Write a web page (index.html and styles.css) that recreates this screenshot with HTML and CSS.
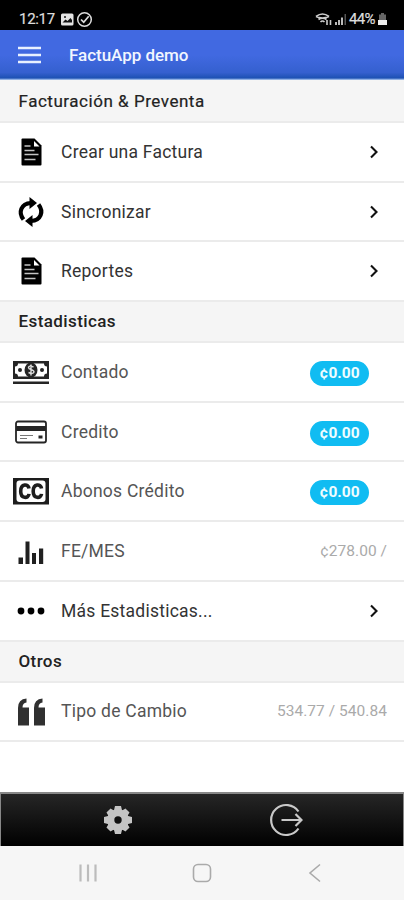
FILE: index.html
```html
<!DOCTYPE html>
<html lang="es">
<head>
<meta charset="utf-8">
<meta name="viewport" content="width=device-width, initial-scale=1">
<title>FactuApp demo</title>
<link rel="stylesheet" href="styles.css">
</head>
<body>
<svg class="defs" width="0" height="0">
  <symbol id="doc" viewBox="0 0 36 36"><path d="M9.500 4.500h12l7 7v19q0 1-1 1h-18q-1 0-1-1v-25q0-1 1-1z"/><path fill="#fff" d="M21 7v5.500h5.500z"/><path stroke="#c4c4c4" stroke-width="1.500" d="M11.500 12h6M11.500 16.500h10M11.500 20.500h14M11.500 25.500h11"/></symbol>
  <symbol id="chev" viewBox="0 0 10 14"><path d="M2 1.500 7.500 7 2 12.500" fill="none" stroke="#111" stroke-width="2.100"/></symbol>
</svg>
<div class="status">
  <span class="time">12:17</span>
  <svg width="34" height="18" viewBox="0 0 34 18"><rect x="2" y="3.500" width="12.500" height="12" rx="1.500" fill="#e4e4e4"/><path d="m3.500 12.500 3-3 2 1.500 3-3 1.500 2v2.500z" fill="#111"/><circle cx="6" cy="7" r="1" fill="#111"/><circle cx="25.500" cy="9.500" r="6.800" fill="none" stroke="#ddd" stroke-width="1.500"/><path d="m22 9.500 2.700 2.700 5-6" fill="none" stroke="#ddd" stroke-width="1.700"/></svg>
  <span class="space"></span>
  <svg width="34" height="18" viewBox="0 0 34 18"><g fill="none" stroke="#ccc" stroke-width="1.600"><path d="M1 6.500q6.500-5 13 0M1 6.500q6.500 3 13 0M3.500 9.500q4-2.500 8 0M5.500 12q2-2 4 0M12 10v5M15.500 10v5"/></g><g fill="#bbb"><path d="M20 12h2v3h-2zM23 10h2v5h-2zM26 7.500h2V15h-2z"/><path d="M29.500 4h1.500v11h-1.500z" fill="#555"/></g></svg>
  <span class="percent">44%</span>
  <svg class="battery" width="9" height="14" viewBox="0 0 9 14"><path d="M3 1h3v1.500h2V8H1V2.500h2z" fill="#666"/><path d="M0 8h9v5H0z" fill="#eee"/></svg>
</div>
<header class="topbar">
  <svg width="23" height="18" viewBox="0 0 23 18"><path stroke="#e9f1ff" stroke-width="2.600" d="M0 2h23M0 9h23M0 16h23"/></svg>
  <h1>FactuApp demo</h1>
</header>
<main>
  <h2 class="first">Facturación &amp; Preventa</h2>
  <div class="row"><svg class="icon"><use href="#doc"/></svg><span class="label">Crear una Factura</span><svg class="chev"><use href="#chev"/></svg></div>
  <div class="row"><svg class="icon" viewBox="0 0 36 36"><g fill="none" stroke="#000" stroke-width="4.200"><path d="M10.500 25.500C5 18.500 8 9.500 18 9"/><path d="M25.500 10.500C31 17.500 28 26.500 18 27"/></g><path d="m16.500 3 7.500 6-7.500 6zM19.500 21v12L12 27z"/></svg><span class="label">Sincronizar</span><svg class="chev"><use href="#chev"/></svg></div>
  <div class="row"><svg class="icon"><use href="#doc"/></svg><span class="label">Reportes</span><svg class="chev"><use href="#chev"/></svg></div>
  <h2>Estadisticas</h2>
  <div class="row"><svg class="icon" viewBox="0 0 36 36"><g fill="#252525"><path d="M0 7h36v18H0zM0 27.500h36V30H0z"/><path fill="#fff" d="M5 9.500h26q0 3 3 3v7q-3 0-3 3H5q0-3-3-3v-7q3 0 3-3z"/><ellipse cx="18" cy="16" rx="6.500" ry="7.500"/><circle cx="7" cy="16" r="2"/><circle cx="29" cy="16" r="2"/></g><path d="M20.500 13q-4.500-2-5 .5c0 2.800 5.500 1.500 5.500 4.500q-1 2.500-5.500.5M18 10.500v11" fill="none" stroke="#ddd" stroke-width="1.400"/></svg><span class="label gray">Contado</span><span class="badge">¢0.00</span></div>
  <div class="row"><svg class="icon" viewBox="0 0 36 36"><rect x="3" y="7.500" width="30" height="21" rx="2" fill="#fff" stroke="#252525" stroke-width="1.800"/><path fill="#252525" d="M3 12h30v5H3zM25.500 21.500h4v3h-4z"/><path stroke="#777" d="M7 21.500h13M7 24.500h7"/></svg><span class="label gray">Credito</span><span class="badge">¢0.00</span></div>
  <div class="row"><svg class="icon" viewBox="0 0 36 36"><path fill="#1d1d1d" d="M0 5h36v26.500H0z"/><rect x="3.500" y="7.500" width="29" height="21.500" rx="3" fill="#fff"/><g fill="none" stroke="#1d1d1d" stroke-width="3.600"><path d="M16 15.500c-.5-5-8.300-5-8.300 2.700s7.800 7.700 8.300 2.700M28.500 15.500c-.5-5-8.300-5-8.300 2.700s7.800 7.700 8.300 2.700"/></g></svg><span class="label gray">Abonos Crédito</span><span class="badge">¢0.00</span></div>
  <div class="row"><svg class="icon" viewBox="0 0 36 36"><path fill="#202020" d="M5.500 24.500H10V31H5.500zM12.500 8.500h4V31h-4zM19 20h4v11h-4zM26 15.500h4.200V31H26z"/></svg><span class="label gray">FE/MES</span><span class="value">¢278.00 /</span></div>
  <div class="row"><svg class="icon" viewBox="0 0 36 36"><circle cx="8" cy="18" r="3.400"/><circle cx="18" cy="18" r="3.400"/><circle cx="28" cy="18" r="3.400"/></svg><span class="label">Más Estadisticas...</span><svg class="chev"><use href="#chev"/></svg></div>
  <h2>Otros</h2>
  <div class="row"><svg class="icon" viewBox="0 0 36 36"><path fill="#303030" d="M5 32.500V15q0-9 8.500-9.500v4q-4 .5-4 5H16v18zM21 32.500V15q0-9 8.500-9.500v4q-4 .5-4 5H32v18z"/></svg><span class="label gray">Tipo de Cambio</span><span class="value">534.77 / 540.84</span></div>
</main>
<footer class="tabs">
  <svg width="30" height="30" viewBox="-15 -15 30 30"><g fill="#c4c4c4"><circle r="10.800"/><path id="t" d="M-3-14h6l1.200 5h-8.400zM-3 14h6l1.200-5h-8.400zM-14-3v6l5 1.200v-8.400zM14-3v6l-5 1.200v-8.400z"/><use href="#t" transform="rotate(45) scale(.96)"/></g><circle r="3.700" fill="#111"/></svg>
  <svg width="34" height="34" viewBox="0 0 34 34"><g fill="none" stroke="#c9c9c9" stroke-width="2.200"><path d="M29.500 8.500A15 15 0 1 0 29.500 25.500"/><path d="M12.500 17h19M26.500 11l6 6-6 6"/></g></svg>
</footer>
<nav class="sysnav">
  <svg width="20" height="18" viewBox="0 0 20 18"><path stroke="#bcbcbc" stroke-width="2.200" d="M2.500 0.500v17M10 .5v17M17.500 .5v17"/></svg>
  <svg width="20" height="20" viewBox="0 0 20 20"><rect x="1.500" y="1.500" width="17" height="17" rx="4.500" fill="none" stroke="#aaa" stroke-width="1.600"/></svg>
  <svg width="14" height="20" viewBox="0 0 14 20"><path d="M12 1.500 2 10l10 8.500" fill="none" stroke="#aaa" stroke-width="1.600"/></svg>
</nav>
</body>
</html>
```
FILE: styles.css
```css
* { box-sizing: border-box; }
body {
  margin: 0;
  width: 404px;
  height: 900px;
  overflow: hidden;
  display: flex;
  flex-direction: column;
  background: #fff;
  font-family: Roboto, "Liberation Sans", sans-serif;
  color: #222;
}
.defs { display: none; }
svg { flex: none; display: block; }
.status {
  height: 30px;
  padding: 8px 17px 0 19px;
  display: flex;
  align-items: center;
  background: #000;
  color: #ddd;
  font-size: 15px;
  font-weight: 400;
  -webkit-text-stroke: 0.2px #ddd;
}
.time { width: 40px; letter-spacing: -0.3px; }
.space { flex: 1; }
.percent { width: 29px; font-size: 15px; letter-spacing: -0.7px; }
.topbar {
  height: 50px;
  padding-left: 18px;
  display: flex;
  align-items: center;
  gap: 28px;
  background: linear-gradient(#4169e1 0, #4169e1 50%, #3560cf 85%, #1d51b3 96%, #b7d1f5 100%);
}
h1 {
  margin: 0;
  color: #f1f6ff;
  font-size: 17px;
  font-weight: 500;
  letter-spacing: -0.03px;
}
h2 {
  margin: 0;
  height: 41px;
  padding: 0 18.500px;
  background: #f5f5f5;
  border-bottom: 2px solid #ebebeb;
  font-size: 17px;
  font-weight: 500;
  line-height: 39px;
  letter-spacing: 0.4px;
}
h2.first {
  height: 43px;
  line-height: 43px;
  font-weight: 400;
  letter-spacing: 0.53px;
  -webkit-text-stroke: 0.2px #222;
}
.row {
  height: 59.700px;
  padding: 0 17px 0 12.500px;
  display: flex;
  align-items: center;
  border-bottom: 2px solid #ebebeb;
}
.icon { width: 36px; height: 36px; }
.label {
  flex: 1;
  padding-left: 12.500px;
  font-size: 17.500px;
  line-height: 24px;
  letter-spacing: 0.24px;
  color: #333;
}
.label.gray { color: #555; }
.chev { width: 10px; height: 14px; margin-right: 8px; }
.badge {
  width: 59px;
  height: 25px;
  margin: 3px 18px 0 0;
  border-radius: 13px;
  background: #10bcf2;
  color: #effcff;
  text-align: center;
  font-size: 15.500px;
  font-weight: 700;
  line-height: 25px;
}
.value { font-size: 15.500px; color: #aaa; letter-spacing: 0.05px; }
.tabs {
  height: 54px;
  margin-top: auto;
  padding: 0 0 0 1px;
  display: flex;
  justify-content: center;
  gap: 136px;
  align-items: center;
  border: 1px solid #888;
  border-top-width: 2px;
  border-bottom: 0;
  background: linear-gradient(#262626, #000);
}
.sysnav {
  height: 54px;
  padding-left: 78px;
  display: flex;
  align-items: center;
  gap: 93.500px;
  background: #f6f6f6;
}
.sysnav svg:last-child { margin-left: 3px; }
```
